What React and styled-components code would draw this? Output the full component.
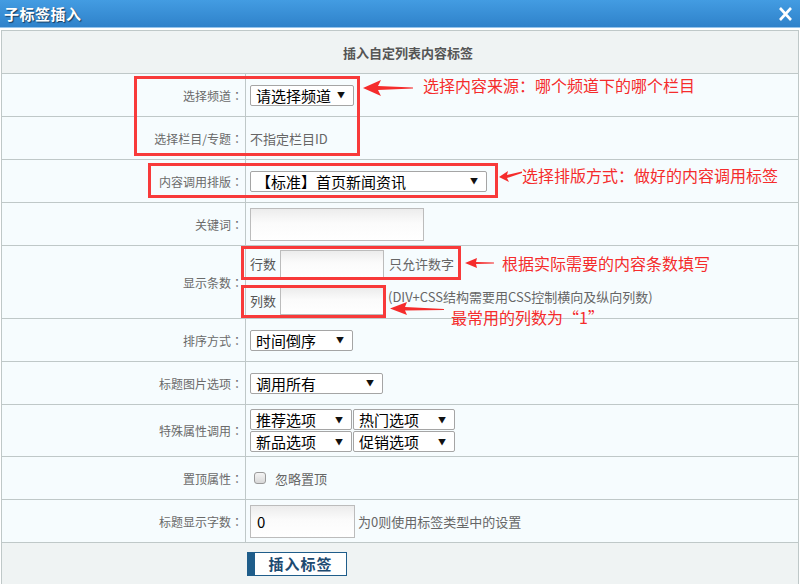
import React from "react";
import styled, { createGlobalStyle } from "styled-components";

const Global = createGlobalStyle`
  html, body { margin: 0; padding: 0; background: #fff; }
  body { font-family: "Noto Sans CJK SC", "Noto Sans", sans-serif; }
`;

const Page = styled.div`
  position: relative;
  width: 800px;
  height: 584px;
  overflow: hidden;
  background: #fff;
  font-family: "Noto Sans CJK SC", "Noto Sans", sans-serif;
`;

const TitleBar = styled.div`
  height: 27px;
  background: linear-gradient(#439ce2, #2f82ca);
  border-bottom: 1px solid #95c4ec;
  display: flex;
  align-items: center;
  justify-content: space-between;
  padding: 0 7px 0 4px;
`;

const Title = styled.div`
  color: #fff;
  font-size: 15px;
  font-weight: bold;
  letter-spacing: 0.5px;
  text-shadow: 1px 1px 1px #173a5c;
`;

const Table = styled.div`
  margin: 2px 0 0 1px;
  width: 798px;
  box-sizing: border-box;
  border: 1px solid #bfc8c8;
`;

const HeaderRow = styled.div`
  height: 42px;
  border-bottom: 1px solid #bfc8c8;
  background: #eff3f3;
  display: flex;
  align-items: center;
  justify-content: center;
  padding-left: 16px;
  font-size: 13px;
  font-weight: bold;
  color: #555;
`;

const Row = styled.div`
  display: grid;
  grid-template-columns: 244px 1fr;
  height: ${(p) => p.$h || 42}px;
  border-bottom: 1px solid #bfc8c8;
  background: #f6fcfe;
`;

const LabelCell = styled.div`
  box-sizing: border-box;
  border-right: 1px solid #bfc8c8;
  display: flex;
  align-items: center;
  justify-content: flex-end;
  padding-right: 2px;
  font-size: 12px;
  color: #6a6a6a;
`;

const Colon = styled.span`
  font-family: "Noto Sans CJK JP", "Noto Sans CJK SC", sans-serif;
`;

const Cell = styled.div`
  display: flex;
  align-items: center;
  padding-left: 4px;
  font-size: 13px;
  color: #666;
`;

const Stack = styled.div`
  display: flex;
  flex-direction: column;
  gap: ${(p) => p.$gap || 0}px;
`;

const Line = styled.div`
  display: flex;
  align-items: center;
  gap: ${(p) => p.$gap || 0}px;
`;

const SelectBox = styled.div`
  box-sizing: border-box;
  width: ${(p) => p.$w}px;
  height: ${(p) => p.$h || 21}px;
  border: 1px solid #a5a5a5;
  border-radius: 2px;
  background: #fff;
  display: flex;
  align-items: center;
  justify-content: space-between;
  padding: 0 8px 0 5px;
  font-size: 15px;
  line-height: 19px;
  color: #000;
  white-space: nowrap;
`;

const Caret = styled.span`
  font-size: 8px;
  color: #111;
  line-height: 1;
`;

const TextInput = styled.div`
  box-sizing: border-box;
  width: ${(p) => p.$w}px;
  height: ${(p) => p.$h}px;
  border: 1px solid #bcbcbc;
  background: linear-gradient(#ececec, #fbfbfb 45%, #fff);
  display: flex;
  align-items: center;
  padding-left: 6px;
  font-size: 15px;
  color: #000;
`;

const Addon = styled.span`
  width: 30px;
  font-size: 13px;
  color: #555;
`;

const Hint = styled.span`
  margin-left: ${(p) => p.$ml || 4}px;
  margin-bottom: ${(p) => (p.$lift || 0) * 2}px;
  font-size: 13px;
  line-height: 15px;
  color: #666;
  white-space: nowrap;
`;

const Check = styled.span`
  box-sizing: border-box;
  width: 12px;
  height: 12px;
  margin-left: 4px;
  border: 1px solid #9a9a9a;
  border-radius: 3px;
  background: linear-gradient(#f4f4f4, #d8d8d8);
`;

const ButtonRow = styled.div`
  height: 42px;
  background: #eff3f3;
  display: flex;
  align-items: center;
  padding-left: 245px;
`;

const InsertButton = styled.button`
  box-sizing: border-box;
  width: 100px;
  height: 24px;
  border: 1px solid #1f5d8a;
  border-left: 8px solid #1f5d8a;
  background: #fff;
  color: #1d4a70;
  font-family: "Noto Sans CJK SC", sans-serif;
  font-size: 15px;
  font-weight: bold;
  letter-spacing: 1px;
  padding: 0;
  line-height: 20px;
`;

const Mark = styled.div`
  position: absolute;
  left: ${(p) => p.$x}px;
  top: ${(p) => p.$y}px;
  width: ${(p) => p.$w}px;
  height: ${(p) => p.$h}px;
  box-sizing: border-box;
  border: 3px solid #f83a3a;
  pointer-events: none;
`;

const Note = styled.div`
  position: absolute;
  left: ${(p) => p.$x}px;
  top: ${(p) => p.$y}px;
  font-size: 16px;
  line-height: 16px;
  color: #f52c2c;
  white-space: nowrap;
`;

const ArrowSvg = styled.svg`
  position: absolute;
  left: ${(p) => p.$x}px;
  top: ${(p) => p.$y}px;
`;

function Label({ children }) {
  return (
    <LabelCell>
      {children}
      <Colon>：</Colon>
    </LabelCell>
  );
}

function Select({ w, h, children }) {
  return (
    <SelectBox $w={w} $h={h}>
      <span>{children}</span>
      <Caret>▼</Caret>
    </SelectBox>
  );
}

function Arrow({ x, y, w, h, points }) {
  return (
    <ArrowSvg $x={x} $y={y} width={w} height={h} viewBox={`0 0 ${w} ${h}`}>
      <polygon points={points} fill="#f52c2c" />
    </ArrowSvg>
  );
}

export default function App() {
  return (
    <Page>
      <Global />
      <TitleBar>
        <Title>子标签插入</Title>
        <svg width="15" height="14" viewBox="0 0 15 14">
          <path d="M2 1 L13 13 M13 1 L2 13" stroke="#fff" strokeWidth="2.6" />
        </svg>
      </TitleBar>
      <Table>
        <HeaderRow>插入自定列表内容标签</HeaderRow>
        <Row>
          <Label>选择频道</Label>
          <Cell>
            <Select w={104}>请选择频道</Select>
          </Cell>
        </Row>
        <Row>
          <Label>选择栏目/专题</Label>
          <Cell>不指定栏目ID</Cell>
        </Row>
        <Row>
          <Label>内容调用排版</Label>
          <Cell>
            <Select w={237}>【标准】首页新闻资讯</Select>
          </Cell>
        </Row>
        <Row>
          <Label>关键词</Label>
          <Cell>
            <TextInput $w={174} $h={33} />
          </Cell>
        </Row>
        <Row $h={72}>
          <Label>显示条数</Label>
          <Cell>
            <Stack $gap={9}>
              <Line>
                <Addon>行数</Addon>
                <TextInput $w={104} $h={28} />
                <Hint $ml={5}>只允许数字</Hint>
              </Line>
              <Line>
                <Addon>列数</Addon>
                <TextInput $w={104} $h={28} />
                <Hint $ml={4} $lift={4}>(DIV+CSS结构需要用CSS控制横向及纵向列数)</Hint>
              </Line>
            </Stack>
          </Cell>
        </Row>
        <Row>
          <Label>排序方式</Label>
          <Cell>
            <Select w={103}>时间倒序</Select>
          </Cell>
        </Row>
        <Row>
          <Label>标题图片选项</Label>
          <Cell>
            <Select w={133}>调用所有</Select>
          </Cell>
        </Row>
        <Row $h={51}>
          <Label>特殊属性调用</Label>
          <Cell>
            <Stack $gap={1}>
              <Line $gap={1}>
                <Select w={102} h={21}>推荐选项</Select>
                <Select w={102} h={21}>热门选项</Select>
              </Line>
              <Line $gap={1}>
                <Select w={102} h={21}>新品选项</Select>
                <Select w={102} h={21}>促销选项</Select>
              </Line>
            </Stack>
          </Cell>
        </Row>
        <Row>
          <Label>置顶属性</Label>
          <Cell>
            <Check />
            <Hint $ml={9}>忽略置顶</Hint>
          </Cell>
        </Row>
        <Row>
          <Label>标题显示字数</Label>
          <Cell>
            <TextInput $w={105} $h={33}>0</TextInput>
            <Hint $ml={3}>为0则使用标签类型中的设置</Hint>
          </Cell>
        </Row>
        <ButtonRow>
          <InsertButton>插入标签</InsertButton>
        </ButtonRow>
      </Table>

      <Mark $x={134} $y={76} $w={226} $h={80} />
      <Mark $x={148} $y={163} $w={350} $h={35} />
      <Mark $x={241} $y={246} $w={220} $h={34} />
      <Mark $x={241} $y={285} $w={145} $h={33} />

      <Arrow x={363} y={80} w={50} h={16} points="0,8 18,0 15,6 50,7.4 50,8.6 15,10 18,16" />
      <Arrow x={498} y={168} w={24} h={14} points="1,9 10,3 9,7 24,3.5 24,5 9,10 11,14" />
      <Arrow x={465} y={258} w={29} h={10} points="0,5 12,0 11,4 29,4.5 29,5.5 11,6 12,10" />
      <Arrow x={390} y={302} w={54} h={13} points="0,6.5 17,0 15,5 54,7 54,8 15,8.5 17,13" />

      <Note $x={423} $y={77}>选择内容来源：哪个频道下的哪个栏目</Note>
      <Note $x={522} $y={167}>选择排版方式：做好的内容调用标签</Note>
      <Note $x={502} $y={255}>根据实际需要的内容条数填写</Note>
      <Note $x={451} $y={309}>最常用的列数为“1”</Note>
    </Page>
  );
}
